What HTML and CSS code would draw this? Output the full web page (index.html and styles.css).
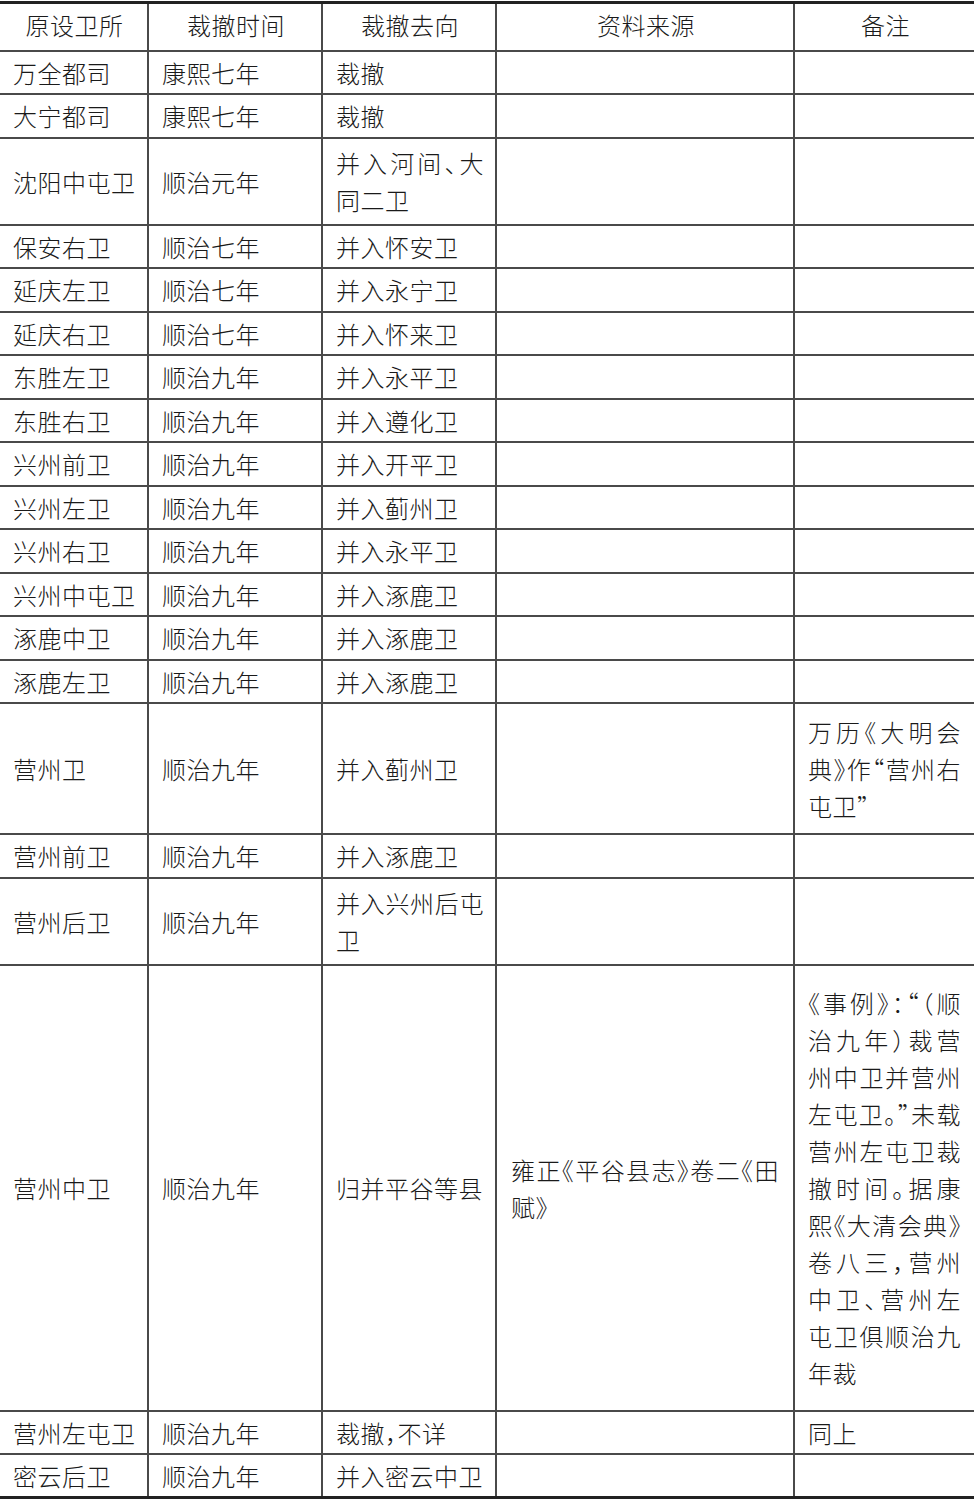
FILE: index.html
```html
<!DOCTYPE html>
<html lang="zh-CN">
<head>
<meta charset="utf-8">
<title>裁撤卫所表</title>
<link rel="stylesheet" href="styles.css">
</head>
<body>
<table class="tbl">
  <colgroup>
    <col class="c1"><col class="c2"><col class="c3"><col class="c4"><col class="c5">
  </colgroup>
  <thead>
    <tr class="head">
      <th>原设卫所</th><th>裁撤时间</th><th>裁撤去向</th><th>资料来源</th><th>备注</th>
    </tr>
  </thead>
  <tbody>
    <tr><td>万全都司</td><td>康熙七年</td><td class="dest">裁撤</td><td class="src"></td><td class="note"></td></tr>
    <tr><td>大宁都司</td><td>康熙七年</td><td class="dest">裁撤</td><td class="src"></td><td class="note"></td></tr>
    <tr class="h2"><td>沈阳中屯卫</td><td>顺治元年</td><td class="dest">并入河间、大同二卫</td><td class="src"></td><td class="note"></td></tr>
    <tr><td>保安右卫</td><td>顺治七年</td><td class="dest">并入怀安卫</td><td class="src"></td><td class="note"></td></tr>
    <tr><td>延庆左卫</td><td>顺治七年</td><td class="dest">并入永宁卫</td><td class="src"></td><td class="note"></td></tr>
    <tr><td>延庆右卫</td><td>顺治七年</td><td class="dest">并入怀来卫</td><td class="src"></td><td class="note"></td></tr>
    <tr><td>东胜左卫</td><td>顺治九年</td><td class="dest">并入永平卫</td><td class="src"></td><td class="note"></td></tr>
    <tr><td>东胜右卫</td><td>顺治九年</td><td class="dest">并入遵化卫</td><td class="src"></td><td class="note"></td></tr>
    <tr><td>兴州前卫</td><td>顺治九年</td><td class="dest">并入开平卫</td><td class="src"></td><td class="note"></td></tr>
    <tr><td>兴州左卫</td><td>顺治九年</td><td class="dest">并入蓟州卫</td><td class="src"></td><td class="note"></td></tr>
    <tr><td>兴州右卫</td><td>顺治九年</td><td class="dest">并入永平卫</td><td class="src"></td><td class="note"></td></tr>
    <tr><td>兴州中屯卫</td><td>顺治九年</td><td class="dest">并入涿鹿卫</td><td class="src"></td><td class="note"></td></tr>
    <tr><td>涿鹿中卫</td><td>顺治九年</td><td class="dest">并入涿鹿卫</td><td class="src"></td><td class="note"></td></tr>
    <tr><td>涿鹿左卫</td><td>顺治九年</td><td class="dest">并入涿鹿卫</td><td class="src"></td><td class="note"></td></tr>
    <tr class="h3"><td>营州卫</td><td>顺治九年</td><td class="dest">并入蓟州卫</td><td class="src"></td><td class="note">万历《大明会典》作“营州右屯卫”</td></tr>
    <tr><td>营州前卫</td><td>顺治九年</td><td class="dest">并入涿鹿卫</td><td class="src"></td><td class="note"></td></tr>
    <tr class="h2"><td>营州后卫</td><td>顺治九年</td><td class="dest">并入兴州后屯卫</td><td class="src"></td><td class="note"></td></tr>
    <tr class="h11"><td>营州中卫</td><td>顺治九年</td><td class="dest">归并平谷等县</td><td class="src">雍正《平谷县志》卷二《田赋》</td><td class="note">《事例》：“（顺治九年）裁营州中卫并营州左屯卫。”未载营州左屯卫裁撤时间。据康熙《大清会典》卷八三，营州中卫、营州左屯卫俱顺治九年裁</td></tr>
    <tr><td>营州左屯卫</td><td>顺治九年</td><td class="dest">裁撤，不详</td><td class="src"></td><td class="note">同上</td></tr>
    <tr class="last"><td>密云后卫</td><td>顺治九年</td><td class="dest">并入密云中卫</td><td class="src"></td><td class="note"></td></tr>
  </tbody>
</table>
</body>
</html>
```

FILE: styles.css
```css
html, body {
  margin: 0;
  padding: 0;
  background: #ffffff;
}

body {
  padding-top: 1px;
  font-family: "Noto Sans CJK SC", "Noto Sans", sans-serif;
  font-weight: 300;
  color: #1a1a1a;
}

.tbl {
  width: 974px;
  table-layout: fixed;
  border-collapse: collapse;
  font-size: 24px;
  letter-spacing: 0.5px;
  line-height: 37px;
  font-feature-settings: "halt";
}

.c1 { width: 148px; }
.c2 { width: 174px; }
.c3 { width: 174px; }
.c4 { width: 298px; }
.c5 { width: 180px; }

.tbl th,
.tbl td {
  border: 2px solid #4a4a4a;
  vertical-align: middle;
  padding: 0 11px 0 13px;
  height: 43.5px;
  box-sizing: border-box;
}

.tbl th:first-child,
.tbl td:first-child { border-left: none; }
.tbl th:last-child,
.tbl td:last-child { border-right: none; }

.tbl th {
  font-weight: 300;
  text-align: center;
  height: 48px;
  padding-bottom: 4px;
  border-top: 3px solid #222;
}

.tbl td {
  text-align: justify;
}

.tbl tr.last td { border-bottom: 3px solid #222; }

.tbl tr.h2 td { height: 87px; }
.tbl tr.h3 td { height: 131px; }
.tbl tr.h11 td { height: 446px; }

.tbl td.src {
  padding: 0 14px;
}

.tbl td.note {
  padding: 0 13px;
}
```
